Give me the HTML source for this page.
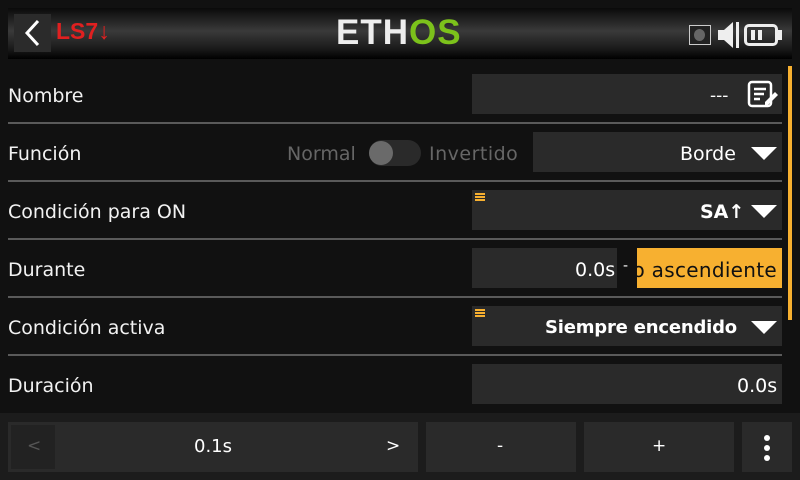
<!DOCTYPE html><html><head><style>
*{margin:0;padding:0;box-sizing:border-box}
body{width:800px;height:480px;background:#111;font-family:"DejaVu Sans","Liberation Sans",sans-serif;color:#fff;position:relative;overflow:hidden}
.a{position:absolute}
.hdr{left:8px;top:8px;width:784px;height:51px;background:linear-gradient(#0a0a0a,#3a3a3a 45%,#1a1a1a 80%,#000)}
.lbl{left:8px;font-size:19px;color:#f2f2f2}
.line{left:8px;width:774px;height:2px;background:#5a5a5a}
.fld{background:#2a2a2a;height:40px}
.tri{width:0;height:0;border-left:13px solid transparent;border-right:13px solid transparent;border-top:13px solid #fff}
.btn{background:#2a2a2a;top:422px;height:50px}
.grip{width:10px;height:2px;background:#f7b030;box-shadow:0 3px 0 #f7b030,0 6px 0 #f7b030}
</style></head><body>
<div class="a hdr"></div>
<div class="a" style="left:14px;top:14px;width:37px;height:38px;background:#2b2b2b"></div>
<svg class="a" style="left:20px;top:18px" width="24" height="30"><path d="M18 3 L7 15 L18 27" stroke="#fff" stroke-width="3" fill="none"/></svg>
<div class="a" style="left:56px;top:18px;font-size:23px;font-weight:bold;color:#e02020;font-family:'Liberation Sans',sans-serif">LS7<span style="font-weight:normal">↓</span></div>
<div class="a" style="left:336px;top:13px;font-size:35px;font-weight:bold;font-family:'Liberation Sans',sans-serif;letter-spacing:1px;line-height:40px"><span style="color:#eee">ETH</span><span style="color:#7cc21b">OS</span></div>
<div class="a" style="left:689px;top:25px;width:22px;height:20px;border:1px solid #ccc;background:#222"></div>
<div class="a" style="left:694px;top:29px;width:11px;height:12px;border-radius:50%;background:#666"></div>
<svg class="a" style="left:716px;top:21px" width="24" height="28"><path d="M2 9h6l9-8v26l-9-8H2z" fill="#eee"/><rect x="20" y="1" width="3" height="26" fill="#eee"/></svg>
<div class="a" style="left:744px;top:24px;width:34px;height:22px;border:3px solid #eee;border-radius:5px"></div>
<div class="a" style="left:778px;top:30px;width:4px;height:10px;background:#eee"></div>
<div class="a" style="left:751px;top:30px;width:4px;height:10px;background:#eee"></div>
<div class="a" style="left:758px;top:30px;width:4px;height:10px;background:#eee"></div>

<div class="a" style="left:788px;top:66px;width:4px;height:254px;background:#f7b030"></div>

<div class="a lbl" style="top:85px">Nombre</div>
<div class="a fld" style="left:472px;top:74px;width:310px"></div>
<div class="a" style="left:710px;top:86px;font-size:17px">---</div>
<svg class="a" style="left:747px;top:80px" width="32" height="28"><rect x="2" y="2" width="22" height="24" rx="3" stroke="#fff" stroke-width="2.5" fill="none"/><path d="M7 9h12M7 14h10M7 19h6" stroke="#fff" stroke-width="2.5"/><path d="M18 22l10-10 3 3-10 10h-3z" fill="#fff"/></svg>
<div class="a line" style="top:122px"></div>

<div class="a lbl" style="top:143px">Función</div>
<div class="a" style="left:287px;top:143px;font-size:19px;color:#666">Normal</div>
<div class="a" style="left:369px;top:140px;width:52px;height:26px;border-radius:13px;background:#2a2a2a"></div>
<div class="a" style="left:369px;top:141px;width:24px;height:24px;border-radius:50%;background:#6a6a6a"></div>
<div class="a" style="left:429px;top:143px;font-size:19px;color:#666;letter-spacing:0.5px">Invertido</div>
<div class="a fld" style="left:533px;top:132px;width:249px"></div>
<div class="a" style="left:680px;top:143px;font-size:19px">Borde</div>
<div class="a tri" style="left:751px;top:147px"></div>
<div class="a line" style="top:180px"></div>

<div class="a lbl" style="top:201px">Condición para ON</div>
<div class="a fld" style="left:472px;top:190px;width:310px"></div>
<div class="a grip" style="left:475px;top:193px"></div>
<div class="a" style="left:700px;top:201px;font-size:19px;font-weight:bold">SA↑</div>
<div class="a tri" style="left:751px;top:205px"></div>
<div class="a line" style="top:238px"></div>

<div class="a lbl" style="top:259px">Durante</div>
<div class="a fld" style="left:472px;top:248px;width:145px"></div>
<div class="a" style="left:575px;top:259px;font-size:19px">0.0s</div>
<div class="a" style="left:623px;top:258px;font-size:14px">-</div>
<div class="a" style="left:637px;top:248px;width:145px;height:40px;background:#f7b030;overflow:hidden"><div style="position:absolute;right:5px;top:10px;font-size:20px;color:#111;white-space:nowrap;letter-spacing:0.3px">Flanco ascendiente</div></div>
<div class="a line" style="top:296px"></div>

<div class="a lbl" style="top:317px">Condición activa</div>
<div class="a fld" style="left:472px;top:306px;width:310px"></div>
<div class="a grip" style="left:475px;top:309px"></div>
<div class="a" style="left:545px;top:317px;font-size:18px;font-weight:bold;letter-spacing:-0.2px">Siempre encendido</div>
<div class="a tri" style="left:751px;top:321px"></div>
<div class="a line" style="top:354px"></div>

<div class="a lbl" style="top:375px">Duración</div>
<div class="a fld" style="left:472px;top:364px;width:310px"></div>
<div class="a" style="left:737px;top:375px;font-size:19px">0.0s</div>

<div class="a" style="left:0;top:413px;width:800px;height:67px;background:#1c1c1c"></div>
<div class="a btn" style="left:8px;width:410px"></div>
<div class="a" style="left:11px;top:425px;width:44px;height:44px;background:#222"></div>
<div class="a" style="left:27px;top:436px;font-size:17px;color:#555">&lt;</div>
<div class="a" style="left:194px;top:436px;font-size:18px">0.1s</div>
<div class="a" style="left:386px;top:436px;font-size:17px">&gt;</div>
<div class="a btn" style="left:426px;width:150px"></div>
<div class="a" style="left:497px;top:436px;font-size:17px">-</div>
<div class="a btn" style="left:584px;width:150px"></div>
<div class="a" style="left:652px;top:436px;font-size:17px">+</div>
<div class="a btn" style="left:742px;width:50px"></div>
<div class="a" style="left:764px;top:435px;width:6px;height:6px;border-radius:50%;background:#fff;box-shadow:0 10px 0 #fff,0 20px 0 #fff"></div>
</body></html>
